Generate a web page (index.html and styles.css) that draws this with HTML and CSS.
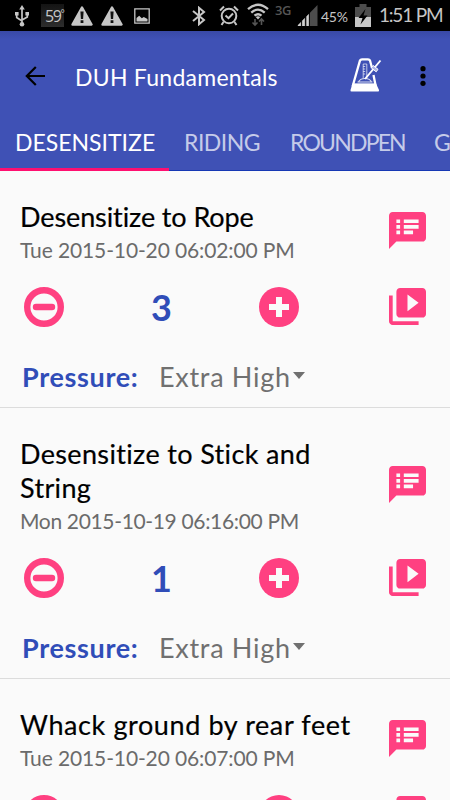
FILE: index.html
```html
<!DOCTYPE html>
<html lang="en">
<head>
<meta charset="utf-8">
<title>DUH Fundamentals</title>
<link rel="stylesheet" href="styles.css">
</head>
<body>
<svg class="defs" width="0" height="0" aria-hidden="true">
  <symbol id="warn" viewBox="0 0 22 20"><path d="M11 1.5 20.5 18.5H1.5Z" fill="#c6c6c6" stroke="#c6c6c6" stroke-width="2.4" stroke-linejoin="round"/><path d="M9.4 5.5h3.2l-.5 7.5H9.9zM9.6 14.3h2.8v2.6H9.6z" fill="#111"/></symbol>
  <symbol id="minus" viewBox="0 0 40 40"><circle cx="20" cy="20" r="16.8" fill="none" stroke="#ff4081" stroke-width="6.4"/><path d="M12 20h16" stroke="#ff4081" stroke-width="6.4" stroke-linecap="round"/></symbol>
  <symbol id="plus" viewBox="0 0 40 40"><circle cx="20" cy="20" r="20" fill="#ff4081"/><path d="M10 20h20M20 10v20" stroke="#fafafa" stroke-width="6"/></symbol>
  <symbol id="notes" viewBox="2 2 20 20"><path fill="#ff4081" d="M20 2H4c-1.1 0-1.99.9-1.99 2L2 22l4-4h14c1.1 0 2-.9 2-2V4c0-1.1-.9-2-2-2zM8 14H6v-2h2v2zm0-3H6V9h2v2zm0-3H6V6h2v2zm7 6h-5v-2h5v2zm3-3h-8V9h8v2zm0-3h-8V6h8v2z"/></symbol>
  <symbol id="video" viewBox="2 2 20 20"><path fill="#ff4081" d="M4 6H2v14c0 1.1.9 2 2 2h14v-2H4V6zm16-4H8c-1.1 0-2 .9-2 2v12c0 1.1.9 2 2 2h12c1.1 0 2-.9 2-2V4c0-1.1-.9-2-2-2zm-8 12.500v-9l6 4.500-6 4.500z"/></symbol>
</svg>

<div class="status">
  <svg class="s-usb" width="14" height="22" viewBox="0 0 14 22" fill="none" stroke="#c6c6c6" stroke-width="1.700"><path d="M7 3v16M1.700 9v3.500L7 16M12.300 9v3L7 15"/><path d="M7 0 9.800 4.500H4.200zM0 7h3.600v3.600H0zM10.400 7H14v3.600h-3.600z" fill="#c6c6c6" stroke="none"/><circle cx="7" cy="19.200" r="2.300" fill="#c6c6c6" stroke="none"/></svg>
  <span class="s-temp">59<i>°</i></span>
  <svg class="s-warn" width="22" height="20"><use href="#warn"/></svg>
  <svg class="s-warn2" width="22" height="20"><use href="#warn"/></svg>
  <svg class="s-pic" width="16" height="16" viewBox="0 0 16 16"><path d="M.8.8h14.400v14.400H.8z" fill="none" stroke="#c6c6c6" stroke-width="1.300"/><path d="M2.500 13.500V10l2.700-2.200 2.600 2.500 2-1.300 3.700 2v2.500z" fill="#c6c6c6"/></svg>
  <svg class="s-bt" width="14" height="20" viewBox="0 0 14 20" fill="none" stroke="#c6c6c6" stroke-width="2"><path d="M1 5l11 9-5 4.200V1.800L12 6 1 15"/></svg>
  <svg class="s-alarm" width="20" height="21" viewBox="0 0 20 21" fill="none" stroke="#c6c6c6" stroke-width="2"><circle cx="10" cy="11" r="7.300"/><path d="M6.500 10.500l3 2.700 4.500-4.700M1 5.500 5 1.500M19 5.500 15 1.500M4.500 17l-2 3M15.500 17l2 3"/></svg>
  <svg class="s-wifi" width="22" height="24" viewBox="0 0 22 24" fill="none" stroke="#c6c6c6" stroke-width="2.300"><path d="M1 6.200Q11-2.600 21 6.200M4.300 9.600q6.700-6 13.400 0M7.500 12.700q3.500-3 7 0"/><path d="M11 16.500 8.700 13.900q2.300-1.500 4.600 0z" fill="#c6c6c6" stroke="none"/><path d="M8 16v6M5.500 19.500 8 22l2.500-2.500M14.500 22v-6M12 18.500l2.500-2.500 2.500 2.500" stroke="#555" stroke-width="1.600"/></svg>
  <span class="s-3g">3G</span>
  <svg class="s-signal" width="21" height="21" viewBox="0 0 21 21"><path d="M0 21 20.500 0v21z" fill="#4d4d4d"/><path d="M1 20 4 17v4H1zM5.200 15.700l2.600-2.600V21H5.200zM9.400 11.400l2.400-2.500V21H9.400z" fill="#d0d0d0"/><path d="M4.400 10v11M8.600 10v11M12.500 6v15" stroke="#000" stroke-width=".8"/></svg>
  <span class="s-pct">45%</span>
  <svg class="s-batt" width="16" height="23" viewBox="0 0 16 23"><path d="M4.500 0h7v3H16v10H0V3h4.500z" fill="#4d4d4d"/><path d="M0 13h16v10H0z" fill="#c6c6c6"/><path d="M10.500 5 3.500 14h4l-2 6.500 7-9H8.500z" fill="#000"/></svg>
  <span class="s-time">1:51 PM</span>
</div>

<header class="header">
  <div class="bar">
    <svg class="back" width="20" height="20" viewBox="0 0 20 20" fill="none" stroke="#000" stroke-width="2.200"><path d="M20 10H1.800M10.800 1 1.800 10l9 9"/></svg>
    <h1 class="heading">DUH Fundamentals</h1>
    <svg class="metronome" width="33" height="34" viewBox="0 0 33 34" fill="none" stroke="#fff"><path d="M23 10 21 2.500Q20.500 1.300 19 1.300H13Q11.500 1.300 11 2.500L4 27H26.500L24.500 17" stroke-width="2.300"/><path d="M3.500 25.500H27L30 32q.3 1.500-1 1.500H2.500q-1.300 0-1-1.500z" fill="#fff" stroke="none"/><path d="M8.500 24H23.500M9.500 24q1.500-3.500 6.500-3.500t6.500 3.500" stroke-width="1.200" opacity=".8"/><path d="M14.200 20V6h3.600v14M14.200 8.500h2M14.200 11h2M14.200 13.500h2M14.200 16h2" stroke-width=".9" opacity=".75"/><path d="M16 21 31.500 2.500" stroke-width="1.900"/><path d="M24.200 7.500l4.800 3.800-1.800 2.500-5-4z" fill="#aeb6e6" stroke-width="1"/></svg>
    <svg class="more" width="6" height="20" viewBox="0 0 6 20"><circle cx="3" cy="2.700" r="2.600"/><circle cx="3" cy="10" r="2.600"/><circle cx="3" cy="17.300" r="2.600"/></svg>
  </div>
  <nav class="tabs">
    <a class="tab tab-on">DESENSITIZE</a><a class="tab tab-riding">RIDING</a><a class="tab tab-pen">ROUNDPEN</a><a class="tab tab-last">G</a>
  </nav>
</header>

<main>
  <section class="item">
    <div class="top"><div class="text"><h2 class="name n1">Desensitize to Rope</h2><p class="date">Tue 2015-10-20 06:02:00 PM</p></div><svg class="side"><use href="#notes"/></svg></div>
    <div class="count"><svg class="btn"><use href="#minus"/></svg><b class="num">3</b><svg class="btn"><use href="#plus"/></svg><svg class="side"><use href="#video"/></svg></div>
    <div class="pressure"><b class="label">Pressure:</b><span class="value">Extra High</span><i class="caret"></i></div>
  </section>
  <section class="item">
    <div class="top"><div class="text"><h2 class="name n2">Desensitize to Stick and<br>String</h2><p class="date d2">Mon 2015-10-19 06:16:00 PM</p></div><svg class="side"><use href="#notes"/></svg></div>
    <div class="count"><svg class="btn"><use href="#minus"/></svg><b class="num">1</b><svg class="btn"><use href="#plus"/></svg><svg class="side"><use href="#video"/></svg></div>
    <div class="pressure"><b class="label">Pressure:</b><span class="value">Extra High</span><i class="caret"></i></div>
  </section>
  <section class="item">
    <div class="top"><div class="text"><h2 class="name n3">Whack ground by rear feet</h2><p class="date">Tue 2015-10-20 06:07:00 PM</p></div><svg class="side"><use href="#notes"/></svg></div>
    <div class="count"><svg class="btn"><use href="#minus"/></svg><b class="num"></b><svg class="btn"><use href="#plus"/></svg><svg class="side"><use href="#video"/></svg></div>
  </section>
</main>
</body>
</html>
```
FILE: styles.css
```css
* { box-sizing: border-box; }
html, body { margin: 0; height: 800px; overflow: hidden; }
body { width: 450px; background: #fafafa; font-family: Lato, "Open Sans", sans-serif; font-variant-ligatures: none; color: #000; display: flex; flex-direction: column; }
h1, h2, p { margin: 0; font-weight: 400; }
svg { display: block; flex: none; }
.defs { position: absolute; }
main { flex: 1; min-height: 0; overflow: hidden; }

.status { height: 31px; flex: none; background: #000; color: #c6c6c6; display: flex; align-items: flex-start; white-space: nowrap; overflow: hidden; }
.s-usb { margin: 5px 0 0 15px; }
.s-temp { width: 23px; height: 23px; margin: 4px 0 0 12px; background: linear-gradient(#141414, #2d2d2d); font: 16px/24px "Open Sans", sans-serif; letter-spacing: -1.4px; padding-left: 4px; }
.s-temp i { font: 10px/10px "Open Sans", sans-serif; vertical-align: 5px; }
.s-warn { margin: 6px 0 0 7px; }
.s-warn2 { margin: 6px 0 0 8px; }
.s-pic { margin: 8px 0 0 11px; }
.s-bt { margin: 6px 0 0 42px; }
.s-alarm { margin: 5px 0 0 13px; }
.s-wifi { margin: 3px 0 0 8px; }
.s-3g { width: 17px; margin: 2px 0 0 6px; color: #555; font: 600 13px/17px "Open Sans", sans-serif; letter-spacing: -.5px; }
.s-signal { margin: 5px 0 0 5px; }
.s-pct { width: 27px; margin: 8px 0 0 3px; font-size: 14px; line-height: 18px; letter-spacing: -.3px; }
.s-batt { margin: 4px 0 0 7px; }
.s-time { margin: 3px 0 0 8px; font-size: 19px; line-height: 24px; letter-spacing: -1.2px; }

.header { height: 140px; flex: none; background: linear-gradient(#3949a6, #3f51b5 8px); color: #fff; border-bottom: 1px solid #1638b4; }
.bar { height: 84px; padding-top: 6px; display: flex; align-items: center; }
.back { margin-left: 25px; }
.heading { width: 242px; margin-left: 30px; padding-top: 2px; font-size: 23px; line-height: 30px; letter-spacing: .25px; white-space: nowrap; }
.metronome { margin-left: 32px; margin-top: -2px; }
.more { margin-left: 38px; }
.tabs { height: 56px; display: flex; white-space: nowrap; overflow: hidden; }
.tab { flex: none; padding: 12px 0 0 15px; width: 106px; height: 56px; font-size: 23px; line-height: 30px; color: #c5cbe9; }
.tab-on { width: 169px; color: #fff; border-bottom: 3px solid #ff0f70; }
.tab-riding { letter-spacing: -.5px; }
.tab-pen { width: 144px; letter-spacing: -1.8px; }
.tab-last { width: 31px; }

.item { height: 271px; flex: none; padding-top: 29px; border-bottom: 1px solid #dcdcdc; }
.item:first-child { height: 237px; }
.top, .count { display: flex; align-items: center; }
.text { width: 368px; padding-left: 20px; white-space: nowrap; }
.side { width: 37px; height: 37px; margin-left: auto; margin-right: 24px; }
.top .side { margin-left: 21px; margin-top: -2px; }
.count .side { margin-top: -1px; }
.name { font-size: 27px; line-height: 34px; -webkit-text-stroke: .2px #000; }
.n1 { letter-spacing: -.1px; }
.n2 { letter-spacing: .35px; }
.n3 { letter-spacing: .6px; }
.date { font-size: 21px; line-height: 28px; padding-top: 2px; margin-bottom: -2px; color: #6b6b6b; letter-spacing: -.12px; }
.d2 { letter-spacing: -.34px; }
.count { margin-top: 25px; height: 40px; padding-left: 24px; }
.btn { width: 40px; height: 40px; }
.num { width: 195px; text-align: center; color: #304db8; font-size: 36px; line-height: 40px; }
.pressure { height: 40px; margin-top: 30px; display: flex; padding-left: 22px; white-space: nowrap; }
.label { width: 137px; color: #304db8; font-size: 27px; line-height: 40px; letter-spacing: .65px; }
.value { width: 134px; color: #707070; font-size: 27px; line-height: 40px; letter-spacing: .7px; }
.caret { margin-top: 15px; border: 6.5px solid transparent; border-top: 7px solid #707070; height: 0; }
```
